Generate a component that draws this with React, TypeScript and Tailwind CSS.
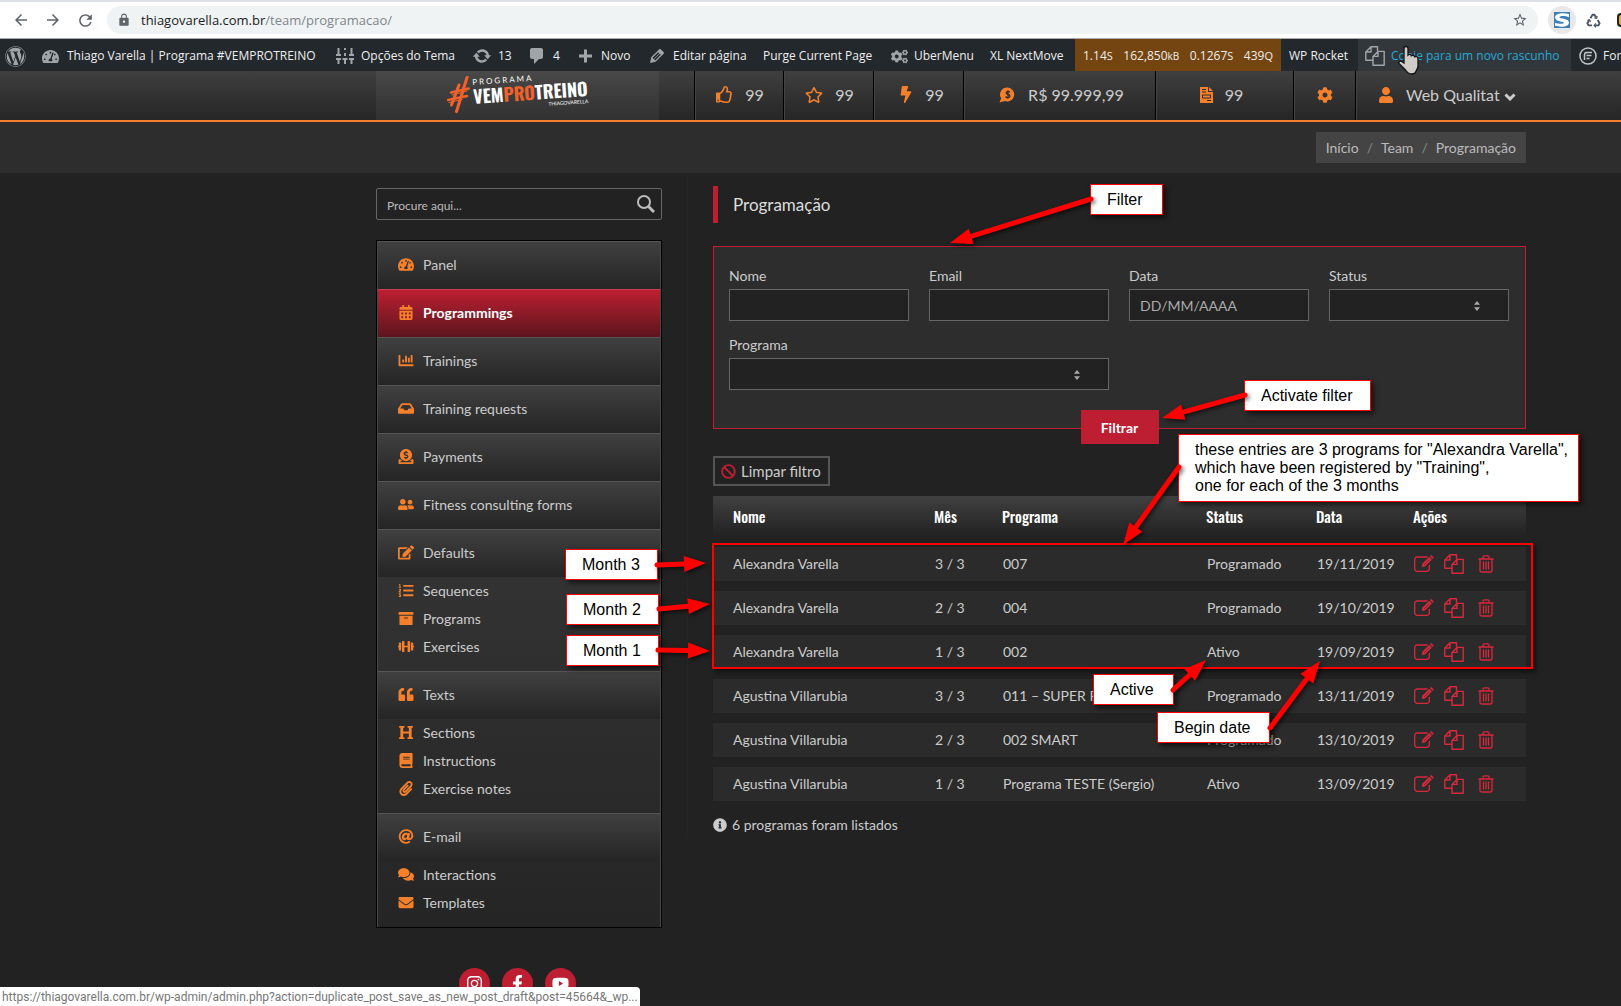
import type { ReactNode } from "react"
import type { IconType } from "react-icons"
import {
  FaArchive,
  FaAt,
  FaBan,
  FaBolt,
  FaBook,
  FaCalendarAlt,
  FaChartBar,
  FaCog,
  FaCogs,
  FaComments,
  FaDonate,
  FaDumbbell,
  FaEdit,
  FaEnvelope,
  FaFacebookF,
  FaHeading,
  FaInbox,
  FaInfoCircle,
  FaInstagram,
  FaListOl,
  FaPaperclip,
  FaQuoteLeft,
  FaRegStar,
  FaRegThumbsUp,
  FaTachometerAlt,
  FaUser,
  FaUserFriends,
  FaWordpress,
  FaYoutube,
} from "react-icons/fa"
import { MdArrowBack, MdArrowForward, MdLock, MdRefresh, MdStarBorder } from "react-icons/md"

const DASH = {
  update:
    "M10.2 3.28c3.53 0 6.43 2.61 6.92 6h2.08l-3.5 4-3.5-4h2.32c-.45-1.97-2.21-3.45-4.32-3.45-1.45 0-2.73.71-3.54 1.78L4.95 5.66C6.23 4.2 8.11 3.28 10.2 3.28zm-.4 13.44c-3.52 0-6.43-2.61-6.92-6H.8l3.5-4c1.17 1.33 2.33 2.67 3.5 4H5.48c.45 1.97 2.21 3.45 4.32 3.45 1.45 0 2.73-.71 3.54-1.78l1.71 1.95c-1.28 1.46-3.15 2.38-5.25 2.38z",
  comments: "M5 2h9c1.1 0 2 .9 2 2v7c0 1.1-.9 2-2 2h-2l-5 5v-5H5c-1.1 0-2-.9-2-2V4c0-1.1.9-2 2-2z",
  plus: "M17 8.5v3h-5v5H9v-5H4v-3h5v-5h3v5h5z",
  edit: "M13.89 3.39l2.71 2.72c.46.46.42 1.24.03 1.64l-8.01 8.02-5.56 1.16 1.16-5.58s7.6-7.63 7.99-8.03c.39-.39 1.22-.39 1.68.07zm-2.73 2.79l-5.59 5.61 1.11 1.11 5.54-5.65zm-2.97 8.23l5.58-5.6-1.07-1.08-5.59 5.6z",
  settings:
    "M2.500 2h2v6H6v2H1V8h1.500zM9 2h2v2H9zM9 7h2v3H9zM15.500 2h2v6H19v2h-5V8h1.500zM1 12h5v2H4.500v4h-2v-4H1zM7.500 12h5v2H11v4H9v-4H7.500zM14 12h5v2h-1.500v4h-2v-4H14z",
}

function DashIcon({ d }: { d: string }) {
  return (
    <svg viewBox="0 0 20 20" className="h-5 w-5 shrink-0 fill-[#a0a5aa]" aria-hidden="true">
      <path d={d} />
    </svg>
  )
}

function CopyIcon({ className }: { className: string }) {
  return (
    <svg viewBox="0 0 20 20" className={className} fill="none" stroke="currentColor" strokeWidth="1.400" strokeLinejoin="round" aria-hidden="true">
      <path d="M8 14.300H.8V6L6 .8h6.500v4.400M6 .8V6H.8" />
      <path d="M8 19.200V10.400l5-5h6.200v13.800zM13 5.400v5H8" />
    </svg>
  )
}

function EditIcon() {
  return (
    <svg viewBox="0 0 20 18" className="h-[18px] w-5" fill="none" stroke="currentColor" strokeWidth="1.300" aria-hidden="true">
      <path d="M13.500 2H3.200A2.500 2.500 0 0 0 .7 4.500v9.300a2.500 2.500 0 0 0 2.500 2.500h9.600a2.500 2.500 0 0 0 2.500-2.500V10" />
      <path d="M8 11.800l.8-3.200 6.500-6.500 2.400 2.400-6.500 6.500z" fill="currentColor" strokeWidth=".6" />
      <path d="M16.200 1.200l1-1 2.400 2.400-1 1z" fill="currentColor" strokeWidth=".4" />
      <path d="M10 10l5.600-5.600" stroke="#2b2b2b" strokeWidth=".6" />
    </svg>
  )
}

function TrashIcon() {
  return (
    <svg viewBox="0 0 16 18" className="h-[18px] w-4" fill="none" stroke="currentColor" strokeWidth="1.300" aria-hidden="true">
      <path d="M.5 4h15M2 4v11.500a1.500 1.500 0 0 0 1.500 1.500h9a1.500 1.500 0 0 0 1.500-1.500V4M5 4V2.200A1.300 1.300 0 0 1 6.300.9h3.400A1.300 1.300 0 0 1 11 2.200V4M5.500 6.500v8M8 6.500v8M10.500 6.500v8" />
    </svg>
  )
}

function BrowserBar() {
  return (
    <div className="flex h-[39px] items-center border-t-2 border-b border-t-[#dee1e6] border-b-[#a9a9ab] bg-white pl-3 text-[#5f6368]">
      <button aria-label="Back" className="mr-3.5"><MdArrowBack className="h-[18px] w-[18px]" /></button>
      <button aria-label="Forward" className="mr-3.5"><MdArrowForward className="h-[18px] w-[18px]" /></button>
      <button aria-label="Reload" className="mr-3"><MdRefresh className="h-[19px] w-[19px]" /></button>
      <div className="flex h-7 flex-1 items-center rounded-full bg-[#eff3f4] pr-2.5 pl-2.5">
        <MdLock className="mr-2.5 h-[14px] w-[14px]" />
        <div className="flex-1 pt-0.5 font-['Open_Sans','Noto_Sans',sans-serif] text-[13px] text-[#80868b]">
          <span className="text-[#202124]">thiagovarella.com.br</span>/team/programacao/
        </div>
        <MdStarBorder className="h-4 w-4" />
      </div>
      <div className="ml-2.5 flex h-7 w-7 items-center justify-center rounded-full bg-[#e8e8ea]">
        <svg viewBox="0 0 16 16" className="h-4 w-4" aria-hidden="true">
          <rect width="16" height="16" fill="#3b7fb8" />
          <path d="M15 2v3.200C12 3.800 6 3.600 5.400 5.200c-.4 1.600 9.600 1 9.600 5.200 0 5-9 4.800-14 3.400v-3c3.400 1.200 8.600 1.400 9 .2C10.200 9.200 1 9.600 1 5.400 1 .8 10 .4 15 2z" fill="#fff" />
        </svg>
      </div>
      <svg viewBox="0 0 16 16" className="ml-2.5 h-[15px] w-[15px]" fill="none" stroke="#4a5568" strokeWidth="2" aria-hidden="true">
        <path d="M4.800 5.500L7 1.800h2l1.800 3M12.500 7.500l2 3.500-1.200 2.200H9.500M6.500 13.200H2.700L1.500 11l2-3.500" />
        <path d="M12 3l-.6 2.800-2.600-.6M10.500 11l-1.800 2.200 1.800 2M1.500 8l2.400-.9.900 2.500" strokeWidth="1.200" />
      </svg>
      <span className="ml-4 h-3.5 w-1 rounded-l-full border-2 border-r-0 border-[#222] bg-[#e0b030]" />
    </div>
  )
}

interface AdminItemProps {
  icon?: ReactNode
  children?: ReactNode
  className: string
}

function AdminItem({ icon, children, className }: AdminItemProps) {
  return (
    <a href="#" className={`flex h-8 shrink-0 items-center pt-0.5 ${className}`}>
      {icon}
      {children}
    </a>
  )
}

function AdminBar() {
  return (
    <nav className="relative flex h-8 items-center overflow-hidden bg-[#23282d] font-['Open_Sans','Noto_Sans',sans-serif] text-[12px] whitespace-nowrap text-[#eee]">
      <AdminItem className="w-[42px] pl-[5px]" icon={<FaWordpress className="h-[21px] w-[21px] text-[#a0a5aa]" />} />
      <AdminItem className="w-[293px] gap-2" icon={<FaTachometerAlt className="h-[17px] w-[17px] shrink-0 text-[#a0a5aa]" />}>
        Thiago Varella | Programa #VEMPROTREINO
      </AdminItem>
      <AdminItem className="w-[137px] gap-1.5" icon={<DashIcon d={DASH.settings} />}>Opções do Tema</AdminItem>
      <AdminItem className="w-[55px] gap-1.5" icon={<DashIcon d={DASH.update} />}>13</AdminItem>
      <AdminItem className="w-[48px] gap-1.5" icon={<DashIcon d={DASH.comments} />}>4</AdminItem>
      <AdminItem className="w-[72px] gap-1.5" icon={<DashIcon d={DASH.plus} />}>Novo</AdminItem>
      <AdminItem className="w-[116px] gap-1.5" icon={<DashIcon d={DASH.edit} />}>Editar página</AdminItem>
      <AdminItem className="w-[128px]">Purge Current Page</AdminItem>
      <AdminItem className="w-[99px] gap-1.5" icon={<FaCogs className="h-[17px] w-[17px] shrink-0 text-[#a0a5aa]" />}>UberMenu</AdminItem>
      <AdminItem className="w-[85px]">XL NextMove</AdminItem>
      <AdminItem className="w-[206px] justify-between bg-[#744510] px-2">
        <span>1.14<small className="text-[11px]">S</small></span>
        <span>162,850<small className="text-[10px]">kB</small></span>
        <span>0.1267<small className="text-[11px]">S</small></span>
        <span>439<small className="text-[11px]">Q</small></span>
      </AdminItem>
      <AdminItem className="w-[77px] pl-2">WP Rocket</AdminItem>
      <AdminItem className="w-[213px] gap-1.5 bg-[#32373c] pl-[7px] text-[#28a8d4]" icon={<CopyIcon className="h-5 w-5 shrink-0 text-[#a0a5aa]" />}>
        Copie para um novo rascunho
      </AdminItem>
      <AdminItem
        className="gap-1.5 pl-2"
        icon={
          <svg viewBox="0 0 18 18" className="h-[18px] w-[18px]" fill="none" stroke="#c0c4c8" strokeWidth="1.500" aria-hidden="true">
            <circle cx="9" cy="9" r="8" />
            <path d="M13 5.500H6.500M12.500 8.500h-5M10.500 11.500h-3M5.500 13V8q0-2.500 2-2.500" />
          </svg>
        }
      >
        Forms
      </AdminItem>
    </nav>
  )
}

function Logo() {
  return (
    <a href="#" aria-label="Programa VEMPROTREINO" className="flex w-[283px] items-start justify-center bg-white/5">
      <svg viewBox="0 0 24 38" className="mt-1 mr-0.5 h-[38px] w-6" fill="none" stroke="#f1622b" strokeLinecap="round" aria-hidden="true">
        <path d="M12 10L4.500 30M20 2.500L9.500 36.500" strokeWidth="3" />
        <path d="M4 17.500l17.500-4M1 25l19-4" strokeWidth="2.600" />
        <path d="M5 20l15-4M2 27.500l13-3M21 1.500L12 31" strokeWidth="1" />
      </svg>
      <span className="mt-0.5 flex -rotate-4 flex-col">
        <span className="text-[8px] leading-[10px] tracking-[2px] text-white">PROGRAMA</span>
        <span className="font-['Oswald','Roboto_Condensed','Roboto',sans-serif] text-[18px] leading-[19px] font-bold text-white">
          VEM<span className="text-[#f1622b]">PRO</span>TREINO
        </span>
        <span className="self-end text-[5px] leading-[6px] text-white">THIAGOVARELLA</span>
      </span>
    </a>
  )
}

interface StatProps {
  icon: ReactNode
  label?: string
  className: string
}

function Stat({ icon, label, className }: StatProps) {
  return (
    <a href="#" className={`flex items-center justify-center gap-3 border-l border-black pb-0.5 text-[16px] text-[#ccc] shadow-[inset_1px_0_0_#444] ${className}`}>
      <span className="text-[#f4802c]">{icon}</span>
      {label}
    </a>
  )
}

function Header() {
  return (
    <header className="flex h-[51px] items-stretch border-b-2 border-[#f4802c] bg-linear-to-b from-[#3f3f3f] to-[#262626] pr-[95px] pl-[376px]">
      <Logo />
      <div className="ml-[35px] flex flex-1">
        <Stat className="w-[89px] pl-0.5" icon={<FaRegThumbsUp className="h-[17px] w-[17px]" />} label="99" />
        <Stat className="w-[90px] pl-0.5" icon={<FaRegStar className="h-[18px] w-[18px]" />} label="99" />
        <Stat
          className="w-[90px] pl-1.5"
          icon={<FaBolt className="h-[17px] w-3.5" />}
          label="99"
        />
        <Stat
          className="w-[192px] pl-1"
          icon={
            <svg viewBox="0 0 17 16" className="h-4 w-[17px]" aria-hidden="true">
              <path d="M9 .5a7 7 0 1 1-3 13.600L.5 15.500l1.700-4.200A7 7 0 0 1 9 .5z" fill="#f4802c" />
              <path d="M11 5.500Q10.500 4.300 9 4.300T7.100 5.800Q7.100 7 9 7.400t2 1.700-2 1.500-2.200-1.200M9 3.200v8.600" fill="none" stroke="#2b2b2b" strokeWidth="1.200" />
            </svg>
          }
          label="R$ 99.999,99"
        />
        <Stat
          className="w-[138px] pr-1.5"
          icon={
            <svg viewBox="0 0 13 16" className="h-4 w-[13px]" aria-hidden="true">
              <path d="M0 0h8v5h5v11H0z" fill="#f4802c" />
              <path d="M9 0l4 4H9z" fill="#f4802c" />
              <path d="M2 2.500h4M2 5h4M2.500 8h8v3h-8zM7 13.500h4" fill="none" stroke="#2b2b2b" />
            </svg>
          }
          label="99"
        />
        <Stat className="w-[62px]" icon={<FaCog className="h-4 w-4" />} />
        <a href="#" className="flex flex-1 items-center border-l border-black pb-0.5 pl-[22px] text-[16px] text-[#ccc] shadow-[inset_1px_0_0_#444]">
          <FaUser className="mr-3 h-4 w-4 text-[#f4802c]" />
          Web Qualitat
          <svg viewBox="0 0 12 8" className="mt-1 ml-1 h-2 w-3" fill="none" stroke="currentColor" strokeWidth="3" aria-hidden="true">
            <path d="M1.500 1.500L6 6l4.500-4.500" />
          </svg>
        </a>
      </div>
    </header>
  )
}

interface MenuEntry {
  label: string
  icon: IconType
  active?: boolean
  children?: { label: string; icon: IconType }[]
}

const menu: MenuEntry[] = [
  { label: "Panel", icon: FaTachometerAlt },
  { label: "Programmings", icon: FaCalendarAlt, active: true },
  { label: "Trainings", icon: FaChartBar },
  { label: "Training requests", icon: FaInbox },
  { label: "Payments", icon: FaDonate },
  { label: "Fitness consulting forms", icon: FaUserFriends },
  {
    label: "Defaults",
    icon: FaEdit,
    children: [
      { label: "Sequences", icon: FaListOl },
      { label: "Programs", icon: FaArchive },
      { label: "Exercises", icon: FaDumbbell },
    ],
  },
  {
    label: "Texts",
    icon: FaQuoteLeft,
    children: [
      { label: "Sections", icon: FaHeading },
      { label: "Instructions", icon: FaBook },
      { label: "Exercise notes", icon: FaPaperclip },
    ],
  },
  {
    label: "E-mail",
    icon: FaAt,
    children: [
      { label: "Interactions", icon: FaComments },
      { label: "Templates", icon: FaEnvelope },
    ],
  },
]

const socials = [
  { label: "Instagram", icon: FaInstagram },
  { label: "Facebook", icon: FaFacebookF },
  { label: "YouTube", icon: FaYoutube },
]

function MenuIcon({ icon: Icon }: { icon: IconType }) {
  return (
    <span className="mr-2 flex w-[18px] justify-center text-[#f4802c]">
      <Icon className="h-[15px] w-4" />
    </span>
  )
}

function Sidebar() {
  return (
    <aside className="w-[286px] shrink-0 pt-[15px]">
      <form className="flex h-8 items-center rounded-[2px] border border-[#666] pr-1.5 pl-2.5">
        <input
          type="search"
          aria-label="Procure aqui"
          placeholder="Procure aqui..."
          className="min-w-0 flex-1 bg-transparent pt-1 text-[12px] outline-none placeholder:text-[#bbb]"
        />
        <button aria-label="Buscar" className="text-[#bbb]">
          <svg viewBox="0 0 18 18" className="h-[18px] w-[18px]" fill="none" stroke="currentColor" aria-hidden="true">
            <circle cx="7" cy="7" r="6" strokeWidth="2" />
            <path d="M11.500 11.500l5.500 5.500" strokeWidth="3" />
          </svg>
        </button>
      </form>

      <nav className="mt-5 border border-black bg-linear-to-b from-[#404040] to-[#252525]">
        <ul className="border-x border-[#484848]">
          {menu.map((entry) => (
            <li key={entry.label}>
              <a
                href="#"
                className={
                  entry.active
                    ? "flex h-12 items-center border-t border-[#c9404f] bg-linear-to-b from-[#bd1e31] to-[#5d151d] pb-0.5 pl-[19px] font-bold text-white"
                    : "flex h-12 items-center border-t border-[#555] bg-linear-to-b from-[#404040] to-[#252525] pb-0.5 pl-[19px] text-[#ccc]"
                }
              >
                <MenuIcon icon={entry.icon} />
                {entry.label}
              </a>
              {entry.children && (
                <ul className="pb-2.5">
                  {entry.children.map((child) => (
                    <li key={child.label}>
                      <a href="#" className="flex h-7 items-center pb-0.5 pl-[19px] text-[#ccc]">
                        <MenuIcon icon={child.icon} />
                        {child.label}
                      </a>
                    </li>
                  ))}
                </ul>
              )}
            </li>
          ))}
        </ul>
      </nav>

      <div className="mt-10 flex justify-center gap-3 pr-1">
        {socials.map(({ label, icon: Icon }) => (
          <a key={label} href="#" aria-label={label} className="flex h-[31px] w-[31px] items-center justify-center rounded-full bg-[#bd1e31] text-white">
            <Icon className="h-[17px] w-[17px]" />
          </a>
        ))}
      </div>
    </aside>
  )
}

function Field({ id, label, children, className = "" }: { id: string; label: string; children: ReactNode; className?: string }) {
  return (
    <div className={className}>
      <label htmlFor={id} className="block pb-1 leading-[18px]">{label}</label>
      {children}
    </div>
  )
}

function SelectBox({ id }: { id: string }) {
  return (
    <div className="relative">
      <select id={id} className="block h-8 w-full appearance-none border border-[#666] bg-[#222] px-2.5 text-[#ccc] outline-none">
        <option></option>
      </select>
      <svg viewBox="0 0 6 10" className="pointer-events-none absolute top-3 right-[29px] h-2.5 w-1.5 fill-[#aaa]" aria-hidden="true">
        <path d="M3 0l3 3.800H0zM3 10L0 6.200h6z" />
      </svg>
    </div>
  )
}

const inputClass = "block h-8 w-full border border-[#666] bg-[#222] px-2.5 text-[#ccc] outline-none placeholder:text-[#aaa]"

const rows = [
  { name: "Alexandra Varella", month: "3 / 3", program: "007", status: "Programado", date: "19/11/2019" },
  { name: "Alexandra Varella", month: "2 / 3", program: "004", status: "Programado", date: "19/10/2019" },
  { name: "Alexandra Varella", month: "1 / 3", program: "002", status: "Ativo", date: "19/09/2019" },
  { name: "Agustina Villarubia", month: "3 / 3", program: "011 – SUPER R", status: "Programado", date: "13/11/2019" },
  { name: "Agustina Villarubia", month: "2 / 3", program: "002 SMART", status: "Programado", date: "13/10/2019" },
  { name: "Agustina Villarubia", month: "1 / 3", program: "Programa TESTE (Sergio)", status: "Ativo", date: "13/09/2019" },
]

function ProgramTable() {
  return (
    <table className="w-full table-fixed border-separate border-spacing-x-0 border-spacing-y-2.5 text-left">
      <colgroup>
        <col className="w-[221px]" />
        <col className="w-[68px]" />
        <col />
        <col className="w-[110px]" />
        <col className="w-[97px]" />
        <col className="w-[113px]" />
      </colgroup>
      <thead>
        <tr className="h-[41px] bg-linear-to-b from-[#404040] to-[#222] font-['Oswald','Roboto_Condensed','Roboto',sans-serif] text-[15px] text-white">
          <th className="pl-5 font-medium">Nome</th>
          <th className="font-medium">Mês</th>
          <th className="font-medium">Programa</th>
          <th className="font-medium">Status</th>
          <th className="font-medium">Data</th>
          <th className="font-medium">Ações</th>
        </tr>
      </thead>
      <tbody>
        {rows.map((row) => (
          <tr key={row.date + row.name} className="h-[34px] bg-[#2b2b2b]">
            <td className="pb-0.5 pl-5">{row.name}</td>
            <td className="pb-0.5 pl-px">{row.month}</td>
            <td className="pb-0.5 pl-px whitespace-nowrap">{row.program}</td>
            <td className="pb-0.5 pl-px">{row.status}</td>
            <td className="pb-0.5 pl-px">{row.date}</td>
            <td className="pl-px">
              <div className="flex items-center text-[#d9283c]">
                <button aria-label="Editar" className="mr-2.5"><EditIcon /></button>
                <button aria-label="Duplicar" className="mr-3.5"><CopyIcon className="h-5 w-5" /></button>
                <button aria-label="Excluir"><TrashIcon /></button>
              </div>
            </td>
          </tr>
        ))}
      </tbody>
    </table>
  )
}

function Content() {
  return (
    <main className="min-w-0 flex-1 border-l border-[#252525] pt-[13px] pl-[25px]">
      <h1 className="flex h-[37px] items-center border-l-[5px] border-[#bd1e31] pl-[15px] text-[17px] text-[#ddd]">Programação</h1>

      <form className="relative mt-[23px] grid h-[183px] grid-cols-4 content-start gap-x-5 gap-y-[15px] border border-[#bd1e31] bg-[#2d2d2d] pt-5 pr-4 pl-[15px]">
        <Field id="nome" label="Nome"><input id="nome" className={inputClass} /></Field>
        <Field id="email" label="Email"><input id="email" className={inputClass} /></Field>
        <Field id="data" label="Data"><input id="data" placeholder="DD/MM/AAAA" className={inputClass} /></Field>
        <Field id="status" label="Status"><SelectBox id="status" /></Field>
        <Field id="programa" label="Programa" className="col-span-2"><SelectBox id="programa" /></Field>
        <div className="absolute inset-x-0 -bottom-4 flex justify-center">
          <button className="h-[34px] w-[78px] bg-[#bd1e31] font-bold text-white">Filtrar</button>
        </div>
      </form>

      <button className="mt-[27px] flex h-[30px] w-[117px] items-center gap-[5px] border-2 border-double border-[#555] px-1.5 text-[15px]">
        <FaBan className="h-[15px] w-[15px] text-[#bd1e31]" />
        Limpar filtro
      </button>

      <ProgramTable />

      <p className="mt-0.5 flex items-center gap-[5px] leading-6">
        <FaInfoCircle className="h-3.5 w-3.5" />
        6 programas foram listados
      </p>
    </main>
  )
}

const arrows = [
  { from: [1091, 199], to: [950, 243] },
  { from: [1245, 395], to: [1162, 418] },
  { from: [1179, 467], to: [1123, 545] },
  { from: [1173, 690], to: [1206, 660] },
  { from: [1270, 728], to: [1320, 661] },
  { from: [657, 565], to: [706, 563] },
  { from: [659, 609], to: [710, 604] },
  { from: [658, 650], to: [710, 651] },
]

function Arrow({ from, to }: { from: number[]; to: number[] }) {
  const length = Math.hypot(to[0] - from[0], to[1] - from[1])
  const ux = (to[0] - from[0]) / length
  const uy = (to[1] - from[1]) / length
  const bx = to[0] - ux * 22
  const by = to[1] - uy * 22
  return (
    <g>
      <line x1={from[0]} y1={from[1]} x2={bx} y2={by} strokeWidth="5" strokeLinecap="round" />
      <polygon points={`${to[0]},${to[1]} ${bx - uy * 8},${by + ux * 8} ${bx + uy * 8},${by - ux * 8}`} stroke="none" />
    </g>
  )
}

function Note({ children, className }: { children: ReactNode; className: string }) {
  return (
    <div className={`absolute flex h-[31px] items-center border border-[#f00] bg-white pl-4 whitespace-nowrap shadow-[3px_3px_5px_rgba(0,0,0,0.6)] ${className}`}>
      {children}
    </div>
  )
}

function Annotations() {
  return (
    <div className="pointer-events-none absolute inset-0 overflow-hidden font-['Liberation_Sans',sans-serif] text-[16px] leading-[18px] text-black">
      <div className="absolute top-[543px] left-[712px] h-[126px] w-[821px] border-2 border-[#f00] shadow-[3px_3px_5px_rgba(0,0,0,0.5)]" />
      <Note className="top-[184px] left-[1090px] w-[73px]">Filter</Note>
      <Note className="top-[380px] left-[1244px] w-[127px]">Activate filter</Note>
      <div className="absolute top-[434px] left-[1178px] w-[401px] border border-[#f00] bg-white py-1.5 pl-4 whitespace-nowrap shadow-[3px_3px_5px_rgba(0,0,0,0.6)]">
        these entries are 3 programs for "Alexandra Varella",
        <br />
        which have been registered by "Training",
        <br />
        one for each of the 3 months
      </div>
      <Note className="top-[549px] left-[565px] w-[93px]">Month 3</Note>
      <Note className="top-[594px] left-[566px] w-[93px]">Month 2</Note>
      <Note className="top-[635px] left-[566px] w-[93px]">Month 1</Note>
      <Note className="top-[674px] left-[1093px] w-[81px]">Active</Note>
      <Note className="top-[712px] left-[1157px] w-[113px]">Begin date</Note>
      <svg className="absolute inset-0 h-full w-full fill-[#f00] stroke-[#f00] drop-shadow-[2px_2px_2px_rgba(0,0,0,0.6)]" aria-hidden="true">
        {arrows.map((arrow) => (
          <Arrow key={arrow.from.join()} from={arrow.from} to={arrow.to} />
        ))}
      </svg>
      <svg viewBox="0 0 24 30" className="absolute top-[45px] left-[1397px] h-[30px] w-6" aria-hidden="true">
        <path
          d="M9 1.500c1.300 0 2 .8 2 2V10c.8-1 3-.8 3.300.8 1-.9 3-.5 3.300 1 1.500-.7 3.400 0 3.400 2V21c0 3-2 4-2 5.500-.5 1.500-2 2.500-4 2.500-3 0-5-1.500-6.500-4L2 18.500c-.8-1.800 1-3 2.600-2L7 18V3.500c0-1.200.7-2 2-2z"
          fill="#d0cbc7"
          stroke="#111"
          strokeWidth="1.300"
        />
      </svg>
    </div>
  )
}

export default function App() {
  return (
    <div className="relative h-screen overflow-hidden bg-[#222] font-['Lato',sans-serif] text-[14px] text-[#ccc]">
      <BrowserBar />
      <AdminBar />
      <Header />
      <div className="flex h-[51px] items-center justify-end bg-[#2d2d2d] pr-[95px]">
        <nav aria-label="Breadcrumb" className="flex h-[31px] items-center gap-2 bg-[#444] px-2.5 text-[#bbb]">
          <a href="#">Início</a>
          <span className="text-[#888]">/</span>
          <a href="#">Team</a>
          <span className="text-[#888]">/</span>
          <span>Programação</span>
        </nav>
      </div>
      <div className="flex items-start gap-[25px] pr-[95px] pl-[376px]">
        <Sidebar />
        <Content />
      </div>
      <Annotations />
      <div className="absolute bottom-0 left-0 rounded-tr bg-white px-0.5 pt-px font-['Roboto',sans-serif] text-[12px] leading-[18px] text-[#777]">
        https://thiagovarella.com.br/wp-admin/admin.php?action=duplicate_post_save_as_new_post_draft&amp;post=45664&amp;_wp...
      </div>
    </div>
  )
}
